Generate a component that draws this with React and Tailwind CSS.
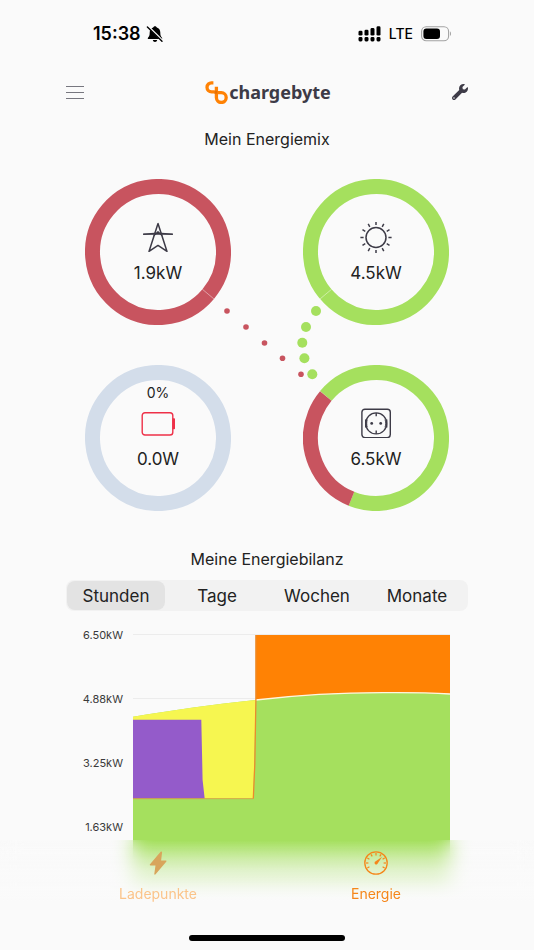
import React from "react";
import { FaWrench } from "react-icons/fa";

const RED = "#c8545f";
const GREEN = "#a5e05e";

function StatusBar() {
  return (
    <div className="flex h-[67px] items-center justify-between pl-11 pr-[33px] text-black">
      <div className="flex items-center gap-[5px]">
        <span className="text-[18px] font-semibold leading-6">15:38</span>
        <svg width="18" height="18" viewBox="0 0 18 18" aria-label="Stumm">
          <path
            d="M9 1.2c.9 0 1.6.6 1.8 1.4 2.2.7 3.5 2.6 3.5 5 0 3 .5 3.9 1.7 5.100.5.5.3 1.300-.5 1.300H2.500c-.8 0-1-.8-.5-1.300C3.200 11.500 3.700 10.600 3.700 7.600c0-2.400 1.300-4.300 3.500-5C7.400 1.800 8.100 1.200 9 1.200zM6.800 14.900h4.400c-.2 1.200-1.100 2-2.200 2s-2-.8-2.200-2z"
            fill="#000"
          />
          <path d="M2.200 1.500l14.400 14.300" stroke="#fafafa" strokeWidth="2" />
          <path d="M1.400 1.900l14.600 14.400" stroke="#000" strokeWidth="1.400" strokeLinecap="round" />
        </svg>
      </div>
      <div className="flex items-center gap-2">
        <svg width="23" height="16" viewBox="0 0 23 16" aria-label="Signal">
          {[4.7, 3.7, 2, 0.3].map((top, i) => (
            <g key={i}>
              <rect x={i * 6 + 0.5} y={top} width="4" height={9.6 - top} rx="1.4" />
              <rect x={i * 6 + 0.5} y="11" width="4" height="4.500" rx="1.400" />
            </g>
          ))}
        </svg>
        <span className="text-[14px] font-medium leading-6">LTE</span>
        <svg width="31" height="16" viewBox="0 0 31 16" aria-label="Akku">
          <rect x="0.600" y="0.800" width="27" height="14" rx="4.600" fill="none" stroke="#a2a2a2" strokeWidth="1.100" />
          <rect x="2.400" y="2.600" width="16.600" height="10.400" rx="3" />
          <path d="M29 5.600c1.300.5 1.300 3.900 0 4.400z" fill="#a2a2a2" />
        </svg>
      </div>
    </div>
  );
}

function Header() {
  return (
    <header className="mb-0.5 flex h-[50px] items-center justify-between px-[17px]">
      <button type="button" aria-label="Menü" className="flex w-[18px] flex-col gap-[5px]">
        <span className="h-px w-full bg-[#77777f]" />
        <span className="h-px w-full bg-[#77777f]" />
        <span className="h-px w-full bg-[#77777f]" />
      </button>
      <div className="flex items-center gap-px">
        <svg width="23" height="24" viewBox="0 0 23 24" fill="none" stroke="#ff8204" strokeWidth="3.300">
          <path d="M8.400 2.900H6.700A4.400 4.400 0 0 0 2 7.300c0 2.600 2 4.500 4.700 4.500h3" />
          <path d="M11.400 6.800V17.600A4.900 4.900 0 1 0 16.300 12.700H11.400" />
          <path d="M9.300 12.200h3" stroke="#e87000" strokeWidth="3" />
        </svg>
        <span className="font-['Noto_Sans',sans-serif] text-[18px] font-bold leading-6 text-[#3d3b47]">chargebyte</span>
      </div>
      <button type="button" aria-label="Einstellungen" className="text-[#3d3b47]">
        <FaWrench size={16} />
      </button>
    </header>
  );
}

function PylonIcon() {
  return (
    <svg width="30" height="30" viewBox="0 0 30 30" fill="none" stroke="#3d3b47" strokeWidth="1.500" strokeLinejoin="round" strokeLinecap="round">
      <path d="M15 1.600L6 29.400l9-6 9 6z" />
      <path d="M0.700 12.200L11.500 11.600h7L29.300 12.200" />
      <path d="M0.700 12.200h28.600" strokeWidth="1" />
      <path d="M11.200 13.400L15 9.800l3.800 3.600" strokeWidth="1.300" />
    </svg>
  );
}

function SunIcon() {
  return (
    <svg width="32" height="30" viewBox="-16 -15.500 32 30" className="overflow-visible" fill="none" stroke="#3d3b47" strokeWidth="1.500">
      <circle r="10" />
      {Array.from({ length: 12 }, (_, i) => (
        <path key={i} d="M0 -12.400v-3.200" transform={`rotate(${i * 30})`} />
      ))}
    </svg>
  );
}

function BatteryIcon() {
  return (
    <svg width="34" height="30" viewBox="0 0 34 30" fill="none">
      <rect x="1.200" y="4.700" width="30.600" height="22.300" rx="2.800" stroke="#ee3048" strokeWidth="1.400" />
      <rect x="31.500" y="10.300" width="2.500" height="11" rx="0.800" fill="#ee3048" />
    </svg>
  );
}

function SocketIcon() {
  return (
    <svg width="30" height="30" viewBox="0 0 30 30" fill="none" stroke="#3d3b47" strokeWidth="1.400">
      <rect x="0.900" y="1.200" width="28.400" height="28.400" rx="3" />
      <circle cx="15.200" cy="15.400" r="10.500" strokeWidth="1.200" />
      <path d="M15.200 5v3.200M15.200 22.600v3.200" />
      <path d="M4.900 11.400v8M25.500 11.400v8" strokeWidth="1.800" />
      <path d="M6.500 11.500c-1 1.400-1 6.400 0 7.800M23.900 11.500c1 1.400 1 6.400 0 7.800" strokeWidth="0.800" />
      <circle cx="10.700" cy="15.400" r="1.400" fill="#3d3b47" stroke="none" />
      <circle cx="19.700" cy="15.400" r="1.400" fill="#3d3b47" stroke="none" />
    </svg>
  );
}

function Ring({ parts, seam, label, value, children }) {
  let offset = 0;
  return (
    <div className="relative h-[146px] w-[146px]">
      <svg className="absolute inset-0" width="146" height="146" viewBox="-73 -73 146 146" fill="none">
        {parts.map((part, i) => {
          const start = offset;
          offset += part.share;
          return (
            <circle
              key={i}
              r="65.500"
              pathLength="100"
              stroke={part.color}
              strokeWidth="15"
              strokeDasharray={part.share === 100 ? undefined : `${part.share} ${100 - part.share}`}
              transform={`rotate(${-140 + start * 3.6})`}
            />
          );
        })}
        {seam && <path d="M0 -58v-15" stroke="#fff" strokeOpacity="0.500" strokeWidth="0.800" transform={`rotate(${seam})`} />}
      </svg>
      <div className="relative flex flex-col items-center pt-[18px]">
        <span className="mb-[5px] h-5 text-[14px] leading-5">{label}</span>
        {children}
        <span className="mt-2.5 text-[17px] leading-[22px]">{value}</span>
      </div>
    </div>
  );
}

const gridDots = [[142, 132], [161, 148], [179.5, 164], [197.5, 179.3], [216, 195.3]];
const solarDots = [[231, 132], [221, 148], [217.3, 163.8], [219.4, 179.3], [227.3, 195.3]];

function EnergyMix() {
  return (
    <section>
      <h2 className="flex h-10 items-center justify-center text-[16px] leading-6">Mein Energiemix</h2>
      <div className="relative mx-auto mt-5 grid w-[364px] grid-cols-[146px_146px] justify-between gap-y-10">
        <Ring parts={[{ share: 100, color: RED }]} seam={130} value="1.9kW">
          <PylonIcon />
        </Ring>
        <Ring parts={[{ share: 100, color: GREEN }]} seam={230} value="4.5kW">
          <SunIcon />
        </Ring>
        <Ring parts={[{ share: 100, color: "#d3ddea" }]} label="0%" value="0.0W">
          <BatteryIcon />
        </Ring>
        <Ring parts={[{ share: 70, color: GREEN }, { share: 30, color: RED }]} value="6.5kW">
          <SocketIcon />
        </Ring>
        <svg className="pointer-events-none absolute inset-0" width="364" height="332" viewBox="0 0 364 332">
          {gridDots.map(([x, y]) => <circle key={y} cx={x} cy={y} r="2.800" fill={RED} />)}
          {solarDots.map(([x, y]) => <circle key={y} cx={x} cy={y} r="5" fill={GREEN} />)}
        </svg>
      </div>
    </section>
  );
}

const ranges = ["Stunden", "Tage", "Wochen", "Monate"];
const ticks = ["6.50kW", "4.88kW", "3.25kW", "1.63kW"];
const solarCurve = "C40 76 80 70.500 122.700 66C170 60.500 215 58.700 250 58.700C275 58.500 295 58.700 317 60";

function EnergyBalance() {
  const [range, setRange] = React.useState("Stunden");
  return (
    <section className="mt-7 px-[17px]">
      <h2 className="mb-px flex h-10 items-center justify-center text-[16px] leading-6">Meine Energiebilanz</h2>
      <div className="grid h-[31px] grid-cols-4 rounded-lg bg-[#f2f2f2] p-px">
        {ranges.map((name) => (
          <button
            key={name}
            type="button"
            aria-pressed={range === name}
            onClick={() => setRange(name)}
            className={
              range === name
                ? "mr-0.5 rounded-lg bg-[#e3e3e3] text-[17px] leading-6"
                : "rounded-lg text-[17px] leading-6"
            }
          >
            {name}
          </button>
        ))}
      </div>
      <div className="mt-[23px] flex pr-[18px]">
        <div className="-mt-2 flex w-[57px] flex-col">
          {ticks.map((tick) => (
            <span key={tick} className="h-16 text-right text-[11px] leading-[18px] text-[#3a3a3a]">
              {tick}
            </span>
          ))}
        </div>
        <svg className="ml-2.5 h-64 min-w-0 flex-1" viewBox="0 0 317 256" preserveAspectRatio="none">
          <path d="M0 .5h317M0 64.500h317M0 128.500h317M0 192.500h317" stroke="#ececec" />
          <path d={`M0 82.700${solarCurve}V256H0z`} fill={GREEN} />
          <path d="M0 82.700C40 76 80 70.500 122.700 66L120.300 164.700H0z" fill="#f6f650" />
          <path d="M0 85.700H68.300L69.600 146L71.700 164.700H0z" fill="#945bca" />
          <path d="M122.700 .9H317V60C295 58.700 275 58.500 250 58.700C215 58.700 170 60.500 122.700 66z" fill="#ff8204" />
          <path d="M122.700 66C170 60.500 215 58.700 250 58.700C275 58.500 295 58.700 317 60" fill="none" stroke="#fff6e0" strokeWidth="1.300" />
          <path d="M122.900 1V66L121.800 130L120.300 164.700" fill="none" stroke="#ec8a2c" strokeWidth="1.300" />
          <path d="M0 164.700H120.300" fill="none" stroke="#cfa648" strokeWidth="1" />
        </svg>
      </div>
    </section>
  );
}

function GaugeIcon() {
  return (
    <svg width="24" height="24" viewBox="-12 -12 24 24" fill="none" stroke="#f5861a">
      <circle r="11.200" strokeWidth="1.300" />
      {[-120, -90, -60, -30, 0, 30, 60, 90, 120].map((a) => (
        <path key={a} d="M0 -10v2.400" strokeWidth="1.200" transform={`rotate(${a})`} />
      ))}
      <path d="M6.200 -6.200L1.300 1A1.500 1.500 0 0 1 -1 -1.300z" fill="#f5861a" stroke="none" />
    </svg>
  );
}

function BottomNav() {
  return (
    <nav className="fixed inset-x-0 bottom-0 h-[110px] bg-[linear-gradient(to_bottom,rgba(250,250,250,0)_0%,rgba(250,250,250,0.5)_18%,rgba(250,250,250,0.7)_28%,rgba(250,250,250,0.82)_40%,rgb(250,250,250)_56%)] backdrop-blur-[10px]">
      <div className="mx-auto grid max-w-[436px] grid-cols-2 pt-[11px] text-[14px] leading-5">
        <a href="#ladepunkte" className="flex flex-col items-center gap-[9px] text-[#fbc48a]">
          <svg width="24" height="24" viewBox="0 0 24 24">
            <path
              d="M14.600 .8L4 13.200c-.5.6-.3 1.200.5 1.200h5L8.300 22.800c-.1.900.7 1.200 1.300.5L20.200 10.800c.5-.6.300-1.200-.5-1.200h-4.600L16.100 1.300c.1-.9-.9-1.200-1.500-.5z"
              fill="#d8a55c"
            />
          </svg>
          Ladepunkte
        </a>
        <a href="#energie" aria-current="page" className="flex flex-col items-center gap-[9px] text-[#f5861a]">
          <GaugeIcon />
          Energie
        </a>
      </div>
      <div className="mx-auto mt-[31px] h-1.5 w-[156px] rounded-full bg-black" />
    </nav>
  );
}

export default function App() {
  return (
    <div className="min-h-screen bg-[#fafafa] pb-[60px] font-['Inter',sans-serif] text-[#222]">
      <div className="mx-auto max-w-[436px]">
        <StatusBar />
        <Header />
        <main>
          <EnergyMix />
          <EnergyBalance />
        </main>
      </div>
      <BottomNav />
    </div>
  );
}
